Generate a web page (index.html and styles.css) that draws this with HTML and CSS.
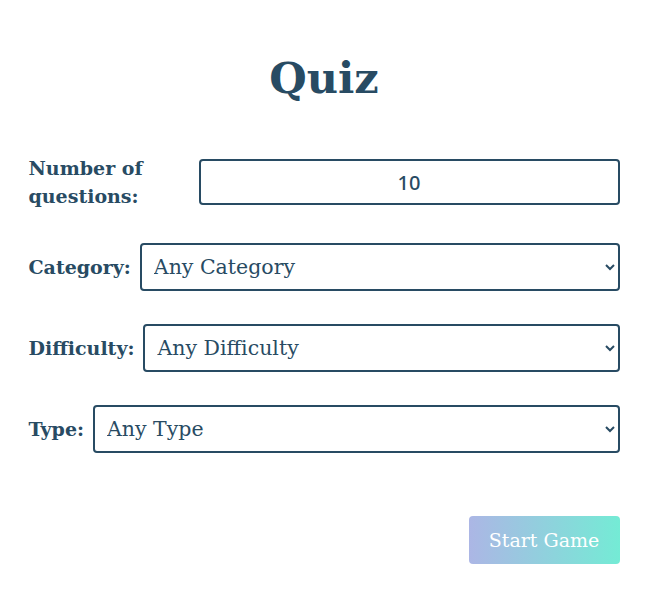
FILE: index.html
```html
<!DOCTYPE html>
<html>
<head>
<meta charset="utf-8">
<link rel="stylesheet" href="styles.css">
</head>
<body>
<main class="quiz">
  <h1 class="title">Quiz</h1>
  <form class="form">
    <div class="row">
      <label class="label label-wrap" for="num">Number of questions:</label>
      <input class="field field-num" id="num" type="number" value="10">
    </div>
    <div class="row">
      <label class="label" for="cat">Category:</label>
      <select class="field" id="cat"><option>Any Category</option></select>
    </div>
    <div class="row">
      <label class="label" for="dif">Difficulty:</label>
      <select class="field" id="dif"><option>Any Difficulty</option></select>
    </div>
    <div class="row">
      <label class="label" for="typ">Type:</label>
      <select class="field" id="typ"><option>Any Type</option></select>
    </div>
    <div class="actions">
      <button class="start" type="button">Start Game</button>
    </div>
  </form>
</main>
</body>
</html>
```
FILE: styles.css
```css
html, body {
  margin: 0;
  padding: 0;
  background: #ffffff;
}
body {
  font-family: "DejaVu Serif", "Liberation Serif", serif;
  color: #284b63;
}
.quiz {
  width: 591px;
  margin: 0 auto;
  padding-top: 48px;
}
.title {
  margin: 0;
  text-align: center;
  font-size: 43px;
  font-weight: bold;
  line-height: 60px;
}
.form {
  margin-top: 46px;
  display: flex;
  flex-direction: column;
  gap: 33px;
}
.row {
  display: flex;
  align-items: center;
  gap: 9px;
}
.label {
  font-size: 19px;
  font-weight: bold;
  line-height: 28px;
  white-space: nowrap;
}
.label-wrap {
  white-space: normal;
  width: 161px;
}
.field {
  flex: 1;
  min-width: 0;
  height: 48px;
  box-sizing: border-box;
  border: 2px solid #284b63;
  border-radius: 4px;
  background: #ffffff;
  color: #284b63;
  font-family: "DejaVu Serif", "Liberation Serif", serif;
  font-size: 20.5px;
  padding: 0 8px;
  outline: none;
}
.field-num {
  height: 46px;
  text-align: center;
  font-family: "Noto Sans", sans-serif;
  font-weight: 500;
  font-size: 20px;
}
.field-num::-webkit-inner-spin-button,
.field-num::-webkit-outer-spin-button {
  -webkit-appearance: none;
  margin: 0;
}
.actions {
  display: flex;
  justify-content: flex-end;
  margin-top: 30px;
}
.start {
  width: 151px;
  height: 48px;
  border: none;
  border-radius: 4px;
  background: linear-gradient(to right, #acb6e5, #74ebd5);
  color: #ffffff;
  font-family: "DejaVu Serif", "Liberation Serif", serif;
  font-size: 19px;
  cursor: pointer;
}
```
